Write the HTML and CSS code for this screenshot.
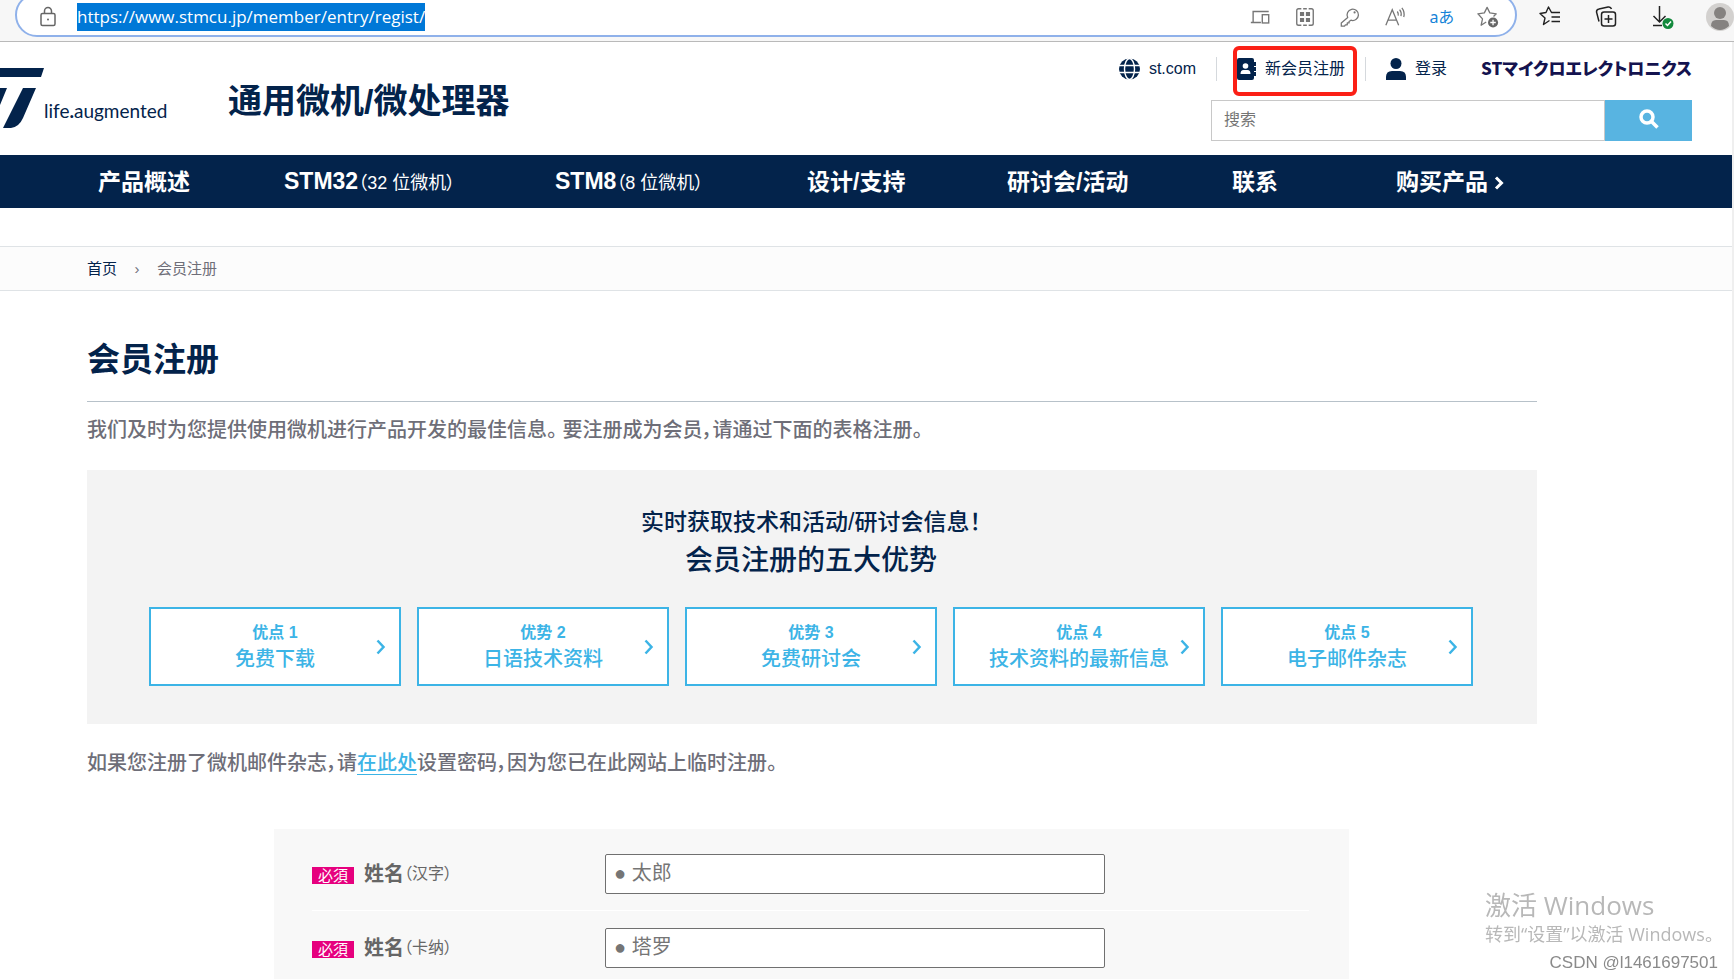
FILE: index.html
```html
<!DOCTYPE html>
<html lang="zh-CN">
<head>
<meta charset="utf-8">
<title>会员注册</title>
<link rel="stylesheet" href="styles.css">
</head>
<body>
<div class="browser-bar">
  <div class="address">
    <svg class="lock" width="18" height="22" viewBox="0 0 18 22" fill="none" stroke="#666" stroke-width="1.5"><rect x="2" y="7.500" width="14" height="12" rx="1.500"/><path d="M5.500 7.500V5a3.500 3.500 0 0 1 7 0v2.500"/><circle cx="9" cy="13.500" r="1" fill="#666" stroke="none"/></svg>
    <span class="url">https://www.stmcu.jp/member/entry/regist/</span>
    <div class="address-tools">
      <svg viewBox="0 0 24 24" fill="none" stroke="#767676" stroke-width="1.500"><path d="M13 18H2M4.500 18V6h17"/><rect x="14.500" y="9.500" width="7" height="9"/></svg>
      <svg viewBox="0 0 24 24" fill="none" stroke="#767676" stroke-width="1.500"><path d="M8 3H5a2 2 0 0 0-2 2v14a2 2 0 0 0 2 2h3M16 3h3a2 2 0 0 1 2 2v14a2 2 0 0 1-2 2h-3M10 3h4M10 21h4"/><path d="M6.500 6.500h4.500v4.500H6.500zM13 6.500h4.500v4.500H13zM6.500 13h4.500v4.500H6.500zM13 13h4.500v4.500H13z" fill="#767676" stroke="none"/></svg>
      <svg viewBox="0 0 24 24" fill="none" stroke="#767676" stroke-width="1.400"><path d="M9.500 12.500a6.200 6.200 0 1 1 3.500 3L11 17v1.500H9V20.500H7L6 22H2.500v-3.500z" stroke-linejoin="round"/><circle cx="17" cy="7" r="1.200" fill="#767676" stroke="none"/></svg>
      <svg viewBox="0 0 24 24" fill="none" stroke="#767676" stroke-width="1.400"><path d="M2 21 9 4l7 17M4.500 15.500h9M14.500 6q1.500 2 1 4.500M17 4q2.500 3 1.500 7M19.500 2q3.500 4.500 2 10"/></svg>
      <span class="translate">aあ</span>
      <svg viewBox="0 0 24 24" fill="none" stroke="#767676" stroke-width="1.400"><path d="m10 17.500-5.500 3.500L6 14 1 8.500l7-1L11 1.500l3 6 7 1-3 3" stroke-linejoin="round"/><circle cx="17.500" cy="18" r="5.500" fill="#666" stroke="none"/><path d="M17.500 15v6M14.500 18h6" stroke="#fff"/></svg>
    </div>
  </div>
  <div class="browser-tools">
    <svg viewBox="0 0 24 24" fill="none" stroke="#222" stroke-width="1.400"><path d="m11.500 15.500-6 4L7 13 2 8.500l6-1L10.500 2l3 5.500H22M13.500 12H22M13.500 16.500H22" stroke-linejoin="round"/></svg>
    <svg viewBox="0 0 24 24" fill="none" stroke="#222" stroke-width="1.500"><rect x="7.500" y="7" width="14" height="14" rx="2.500"/><path d="M14.500 10v8M10.500 14h8M5 16.500 2.500 7A3 3 0 0 1 5 4l9-2a3 3 0 0 1 3.500 2"/></svg>
    <svg viewBox="0 0 24 24" fill="none" stroke="#222" stroke-width="1.500"><path d="M9.500 1v16M3.500 11l6 6 6-6M3 20.500h9"/><circle cx="18" cy="18.500" r="5.500" fill="#138a3d" stroke="none"/><path d="m15.500 18.500 2 2 3.500-4" stroke="#fff"/></svg>
    <svg class="avatar" viewBox="0 0 28 28"><circle cx="14" cy="14" r="14" fill="#d3d1cf"/><circle cx="14" cy="10" r="6" fill="#858280"/><path d="M5 23q0-6 5-6h8q5 0 5 6-9 8-18 0" fill="#858280"/></svg>
  </div>
</div>

<div class="page">
  <header class="site-header">
    <a class="brand" href="#">
      <svg width="44" height="62" viewBox="0 0 44 62" fill="#03234b"><path d="M0 1h44l-3 9H0zM0 21h7L0 38zM23 21h13L23 51q-4 9-12 10H3z"/></svg>
      <span class="tagline">life<b>.</b>augmented</span>
    </a>
    <p class="site-title">通用微机/微处理器</p>
    <div class="header-side">
      <nav class="user-links">
        <a class="user-link" href="#"><svg width="21" height="22" viewBox="0 0 21 22"><circle cx="10.500" cy="11" r="10.500" fill="#03234b"/><g fill="none" stroke="#fff" stroke-width="1.400"><ellipse cx="10.500" cy="11" rx="5" ry="10.500"/><path d="M0 7.500h21M0 14.500h21"/></g></svg>st.com</a>
        <a class="user-link marked" href="#"><svg width="19" height="22" viewBox="0 0 19 22"><path d="M0 2a2 2 0 0 1 2-2h13a2 2 0 0 1 2 2v2h2v4h-2v1h2v4h-2v1h2v4h-2v2a2 2 0 0 1-2 2H2a2 2 0 0 1-2-2z" fill="#03234b"/><circle cx="8.500" cy="8" r="2.800" fill="#fff"/><path d="M3.500 16q0-4 3-4h4q3 0 3 4z" fill="#fff"/></svg>新会员注册</a>
        <a class="user-link" href="#"><svg width="20" height="22" viewBox="0 0 20 22" fill="#03234b"><circle cx="10" cy="5.500" r="5.500"/><path d="M0 22v-3q0-6 6-6h8q6 0 6 6v3z"/></svg>登录</a>
      </nav>
      <span class="company">STマイクロエレクトロニクス</span>
      <form class="search">
        <input type="text" placeholder="搜索" aria-label="搜索">
        <button type="button" aria-label="搜索"><svg width="20" height="20" viewBox="0 0 20 20" fill="none" stroke="#fff" stroke-width="3.500"><circle cx="8" cy="8" r="6"/><path d="m12.500 12.500 6 6"/></svg></button>
      </form>
    </div>
  </header>

  <nav class="main-nav">
    <a href="#">产品概述</a>
    <a href="#">STM32<small>（32 位微机）</small></a>
    <a href="#">STM8<small>（8 位微机）</small></a>
    <a href="#">设计/支持</a>
    <a href="#">研讨会/活动</a>
    <a href="#">联系</a>
    <a href="#">购买产品<svg width="10" height="14" viewBox="0 0 10 14" fill="none" stroke="#fff" stroke-width="3"><path d="m2 1.500 5.500 5.500L2 12.500"/></svg></a>
  </nav>

  <nav class="breadcrumb"><a href="#">首页</a><span class="sep">›</span><span>会员注册</span></nav>

  <main class="content">
    <h1>会员注册</h1>
    <p class="lead">我们及时为您提供使用微机进行产品开发的最佳信息。 要注册成为会员，请通过下面的表格注册。</p>
    <section class="benefits">
      <h2><span class="kicker">实时获取技术和活动/研讨会信息！</span><span class="headline">会员注册的五大优势</span></h2>
      <div class="benefit-list">
        <a class="benefit" href="#"><span class="num">优点 1</span><span>免费下载</span><svg class="chev" viewBox="0 0 10 16"><path d="m1.500 1.500 6 6.500-6 6.500"/></svg></a>
        <a class="benefit" href="#"><span class="num">优势 2</span><span>日语技术资料</span><svg class="chev" viewBox="0 0 10 16"><path d="m1.500 1.500 6 6.500-6 6.500"/></svg></a>
        <a class="benefit" href="#"><span class="num">优势 3</span><span>免费研讨会</span><svg class="chev" viewBox="0 0 10 16"><path d="m1.500 1.500 6 6.500-6 6.500"/></svg></a>
        <a class="benefit" href="#"><span class="num">优点 4</span><span>技术资料的最新信息</span><svg class="chev" viewBox="0 0 10 16"><path d="m1.500 1.500 6 6.500-6 6.500"/></svg></a>
        <a class="benefit" href="#"><span class="num">优点 5</span><span>电子邮件杂志</span><svg class="chev" viewBox="0 0 10 16"><path d="m1.500 1.500 6 6.500-6 6.500"/></svg></a>
      </div>
    </section>
    <p class="note">如果您注册了微机邮件杂志，请<a href="#">在此处</a>设置密码，因为您已在此网站上临时注册。</p>
    <form class="register">
      <div class="field">
        <label for="name"><span class="required">必須</span><b>姓名</b><small>（汉字）</small></label>
        <input id="name" type="text" placeholder="● 太郎">
      </div>
      <div class="field">
        <label for="kana"><span class="required">必須</span><b>姓名</b><small>（卡纳）</small></label>
        <input id="kana" type="text" placeholder="● 塔罗">
      </div>
    </form>
  </main>
</div>

<div class="watermark">
  <span class="wm-title">激活 Windows</span>
  <span class="wm-text">转到“设置”以激活 Windows。</span>
  <span class="wm-credit">CSDN @l1461697501</span>
</div>
</body>
</html>
```
FILE: styles.css
```css
* { box-sizing: border-box; }
body {
  margin: 0;
  height: 100vh;
  overflow: hidden;
  background: #fff;
  color: #6e6e78;
  font-family: "Liberation Sans", "Noto Sans CJK SC", sans-serif;
  font-size: 20px;
  line-height: 32px;
  font-feature-settings: "palt";
}
a { color: inherit; text-decoration: none; }
p, h1, h2 { margin: 0; }
svg { flex: none; }

.browser-bar {
  display: flex;
  justify-content: space-between;
  height: 42px;
  padding-left: 15px;
  background: #f7f7f7;
  border-bottom: 1px solid #b9b9b9;
}
.address {
  display: flex;
  flex: 1;
  align-items: center;
  height: 44px;
  margin-top: -7px;
  padding: 4px 16px 0 22px;
  background: #fff;
  border: 2px solid #8fb1ea;
  border-radius: 22px;
}
.url {
  margin-left: 20px;
  background: #0078d7;
  color: #fff;
  font-family: "Open Sans", sans-serif;
  font-size: 17px;
  line-height: 28px;
}
.address-tools, .browser-tools { display: flex; align-items: center; }
.address-tools { gap: 23px; margin-left: auto; }
.address-tools svg { width: 22px; height: 22px; }
.translate {
  color: #1683d8;
  font-family: "Noto Sans", "Noto Sans CJK JP", sans-serif;
  font-size: 16px;
  line-height: 24px;
}
.browser-tools { gap: 32px; height: 34px; margin-left: 21px; }
.browser-tools svg { width: 24px; height: 24px; }
.browser-tools .avatar { width: 28px; height: 28px; }

.page { border-right: 2px solid #efefef; }
.site-header {
  display: flex;
  height: 113px;
  padding-right: 40px;
  color: #03234b;
}
.brand { display: flex; width: 228px; padding-top: 25px; }
.tagline {
  padding-top: 28px;
  font-family: "Lato", sans-serif;
  font-size: 19px;
  line-height: 32px;
}
.site-title {
  padding-top: 35px;
  font-size: 34px;
  font-weight: 700;
  line-height: 48px;
}
.header-side {
  display: grid;
  grid-template-columns: auto auto;
  grid-template-rows: 50px auto;
  justify-content: end;
  align-content: start;
  margin-left: auto;
  padding-top: 2px;
}
.user-links { display: flex; align-items: center; font-size: 16px; }
.user-link {
  display: flex;
  align-items: center;
  gap: 9px;
  height: 24px;
  padding: 0 20px;
  line-height: 24px;
}
.user-link + .user-link { border-left: 1px solid #d5d9dd; }
.user-link.marked {
  position: relative;
}
.user-link.marked::after {
  content: "";
  position: absolute;
  inset: -11px 8px -15px 16px;
  border: 4px solid #fb2016;
  border-radius: 6px;
}
.company {
  padding-left: 14px;
  color: #14134f;
  font-family: "Noto Sans CJK JP", sans-serif;
  font-size: 17px;
  font-weight: 900;
  line-height: 48px;
}
.search {
  grid-column: 1 / -1;
  justify-self: end;
  display: flex;
  width: 481px;
  height: 41px;
  margin-top: 6px;
}
.search input {
  flex: 1;
  min-width: 0;
  padding: 0 12px 2px;
  border: 1px solid #c8c8c8;
  font: inherit;
  font-size: 16px;
}
.search button {
  width: 87px;
  padding: 0;
  background: #58b4e1;
  border: 0;
}
::placeholder { color: #757575; opacity: 1; }

.main-nav {
  display: grid;
  grid-template-columns: 186fr 271fr 252fr 200fr 225fr 164fr 336fr;
  align-items: center;
  height: 53px;
  padding-left: 98px;
  background: #03234b;
  color: #fff;
  font-size: 23px;
  font-weight: 700;
  line-height: 48px;
  white-space: nowrap;
}
.main-nav small { font-size: 18px; font-weight: 400; }
.main-nav svg { margin-left: 6px; }

.breadcrumb {
  display: flex;
  margin-top: 38px;
  padding: 0 87px;
  background: #fcfcfc;
  border: solid #dfe3e6;
  border-width: 1px 0;
  font-size: 15px;
  line-height: 43px;
}
.breadcrumb a { color: #03234b; }
.sep { width: 40px; text-align: center; }

.content { margin: 0 195px 0 87px; padding-top: 40px; }
h1 {
  padding-bottom: 12px;
  border-bottom: 1px solid #b7c1c9;
  color: #03234b;
  font-size: 33px;
  line-height: 58px;
}
.lead { margin: 12px 0 24px; font-weight: 500; }
.benefits { padding: 36px 64px 38px 62px; background: #f3f3f3; }
.benefits h2 { color: #03234b; text-align: center; font-weight: 500; }
.kicker, .headline { display: block; }
.kicker { font-size: 23px; line-height: 32px; }
.headline { font-size: 28px; line-height: 46px; }
.benefit-list {
  display: grid;
  grid-template-columns: repeat(5, 1fr);
  gap: 16px;
  margin-top: 23px;
}
.benefit {
  position: relative;
  display: grid;
  justify-items: center;
  padding: 12px 0 11px;
  background: #fff;
  border: 2px solid #3cb4e6;
  color: #3cb4e6;
  font-weight: 500;
  line-height: 28px;
}
.num { font-size: 16px; font-weight: 700; line-height: 24px; }
.chev {
  position: absolute;
  right: 13px;
  top: 30px;
  width: 10px;
  height: 16px;
  fill: none;
  stroke: #3cb4e6;
  stroke-width: 2.5;
}
.note { margin: 23px 0 50px; font-weight: 500; }
.note a { color: #3cb4e6; border-bottom: 1px solid #3cb4e6; }

.register {
  margin: 0 188px 0 187px;
  padding: 8px 40px 8px 38px;
  background: #f8f8f8;
}
.field {
  display: flex;
  align-items: center;
  padding: 17px 0 16px;
}
.field + .field { border-top: 1px solid #fff; }
.field label { display: flex; align-items: center; width: 293px; color: #666; }
.required {
  margin: 2px 10px 0 0;
  padding: 0 6px;
  background: #e6007e;
  color: #fff;
  font-size: 15px;
  line-height: 17px;
}
.field small { font-size: 16px; }
.field input {
  width: 500px;
  height: 40px;
  padding: 0 8px 2px;
  background: #fff;
  border: 1px solid #707070;
  border-radius: 2px;
  font: inherit;
}

.watermark {
  position: fixed;
  right: 16px;
  bottom: 0;
  display: grid;
  width: 233px;
  color: #b8b8b8;
  font-family: "Open Sans", "Noto Sans CJK SC", sans-serif;
  white-space: nowrap;
}
.wm-title { font-size: 26px; line-height: 32px; }
.wm-text { font-size: 18px; line-height: 26px; }
.wm-credit {
  justify-self: end;
  color: #8a8a8a;
  font-family: "Liberation Sans", sans-serif;
  font-size: 17px;
  line-height: 32px;
}
```
